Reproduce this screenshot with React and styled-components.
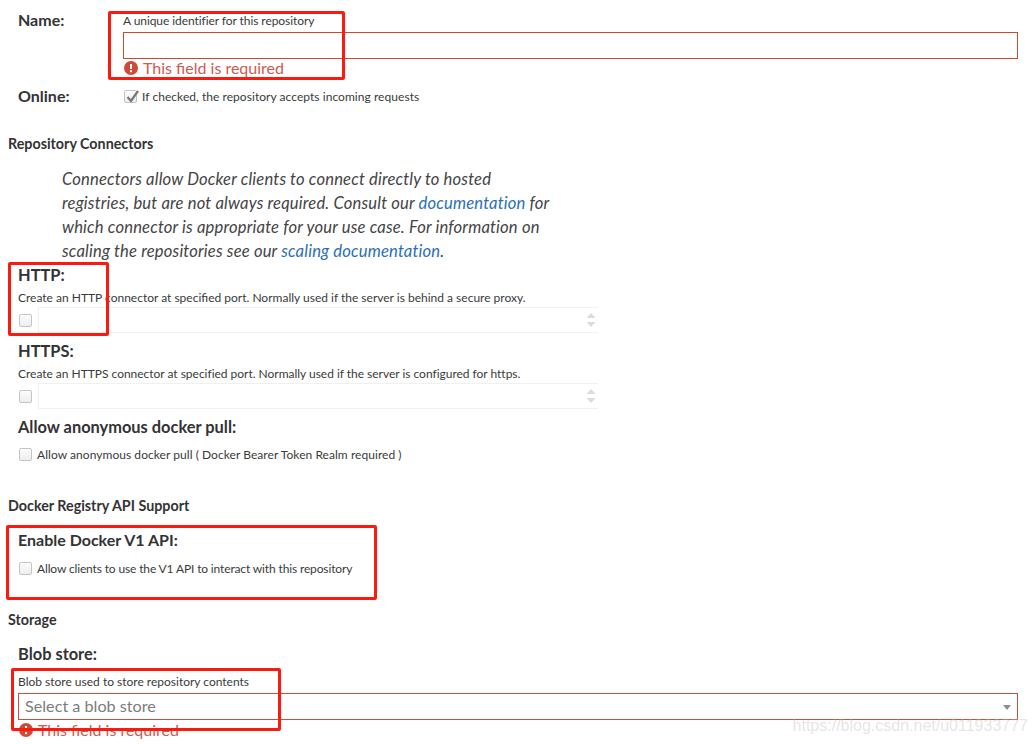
import React from "react"
import styled, { createGlobalStyle } from "styled-components"

const GlobalStyle = createGlobalStyle`
	html, body { margin: 0; padding: 0; background: #fff; }
	body {
		font-family: Lato, "Open Sans", "Liberation Sans", sans-serif;
		color: #333;
		width: 1036px;
		height: 744px;
		overflow: hidden;
	}
`

const Page = styled.div`
	position: relative;
	width: 1036px;
	height: 744px;
	overflow: hidden;
	padding: 11px 18px 0 18px;
	box-sizing: border-box;
`

const Row = styled.div`
	display: flex;
	height: ${props => props.height}px;
`

const RowLabel = styled.div`
	width: 105px;
	flex: none;
	font-size: 16px;
	font-weight: 700;
	line-height: 18px;
	color: #333;
`

const RowBody = styled.div`
	flex: 1;
	min-width: 0;
`

const Help = styled.div`
	font-size: 12px;
	letter-spacing: ${props => props.spacing || 0}px;
	line-height: 14px;
	height: ${props => props.height || 14}px;
	padding-top: ${props => props.top || 0}px;
	color: #3a3a3a;
`

const TextInput = styled.div`
	box-sizing: border-box;
	height: 27px;
	border: 1px solid #d0492f;
	background: #fff;
`

const Error = styled.div`
	display: flex;
	align-items: center;
	gap: 5px;
	height: 18px;
	margin-top: ${props => props.top || 0}px;
	padding-left: 1px;
	font-size: 16px;
	line-height: 18px;
	color: #cf5a52;
`

const ErrorIcon = () => (
	<svg width="14" height="14" viewBox="0 0 14 14">
		<circle cx="7" cy="7" r="7" fill="#cc4a37" />
		<rect x="6" y="3" width="2" height="5" fill="#fff" />
		<rect x="6" y="9.2" width="2" height="2" fill="#fff" />
	</svg>
)

const CheckRow = styled.div`
	display: flex;
	align-items: center;
	gap: 5px;
	height: ${props => props.height || 14}px;
	font-size: 12px;
	letter-spacing: ${props => props.spacing || 0.05}px;
	color: #3a3a3a;
	padding-left: ${props => props.indent || 0}px;
`

const Box = styled.div`
	position: relative;
	flex: none;
	box-sizing: border-box;
	width: 13px;
	height: 13px;
	border: 1px solid #c4c4c4;
	border-radius: 2px;
	background: linear-gradient(#fbfbfb, #eeeeee);
	box-shadow: inset 0 1px 0 #fff;
`

const CheckMark = styled.svg`
	position: absolute;
	left: 0;
	top: -3px;
`

const Section = styled.div`
	margin-left: -10px;
	height: ${props => props.height}px;
	margin-top: ${props => props.top}px;
	font-size: 14.3px;
	font-weight: 700;
	line-height: 15px;
	color: #333;
`

const Note = styled.p`
	margin: 0 0 0 44px;
	white-space: nowrap;
	font-size: 16.6px;
	letter-spacing: 0.17px;
	font-style: italic;
	line-height: 24px;
	color: #444;
`

const Link = styled.a`
	color: #2a6fb5;
	text-decoration: none;
`

const FieldLabel = styled.div`
	font-size: ${props => props.size || 16.4}px;
	font-weight: 700;
	line-height: 18px;
	height: ${props => props.height}px;
	margin-top: ${props => props.top || 0}px;
	color: #333;
`

const PortRow = styled.div`
	display: flex;
	align-items: center;
	width: 580px;
	height: 26px;
	gap: 6px;
	padding-left: 1px;
	box-sizing: border-box;
`

const PortInput = styled.div`
	position: relative;
	flex: 1;
	box-sizing: border-box;
	height: 26px;
	border: 1px solid #f0f0f0;
	border-right: 0;
`

const Spinner = styled.svg`
	position: absolute;
	right: 2px;
	top: 4px;
`

const Select = styled.div`
	position: relative;
	box-sizing: border-box;
	height: 27px;
	line-height: 24px;
	padding-left: 6px;
	border: 1px solid #c9503a;
	font-size: 16.2px;
	color: #7c7c7c;
`

const Caret = styled.div`
	position: absolute;
	right: 6px;
	top: 11px;
	width: 0;
	height: 0;
	border-left: 4px solid transparent;
	border-right: 4px solid transparent;
	border-top: 5px solid #8e8e8e;
`

// the red marks drawn on top of the screenshot
const Mark = styled.div`
	position: absolute;
	box-sizing: border-box;
	left: ${props => props.x}px;
	top: ${props => props.y}px;
	width: ${props => props.w}px;
	height: ${props => props.h}px;
	border: 3px solid #fb1a10;
	border-radius: 2px;
`

const Watermark = styled.div`
	position: absolute;
	right: 8px;
	top: 715px;
	font-family: "Liberation Sans", Arial, sans-serif;
	font-size: 16px;
	line-height: 22px;
	color: rgba(190, 190, 190, 0.4);
`

const Port = () => (
	<PortRow>
		<Box />
		<PortInput>
			<Spinner width="10" height="16" viewBox="0 0 10 16">
				<path d="M5 1 L9.5 6 H0.5 Z M5 15 L9.5 10 H0.5 Z" fill="#dcdcdc" />
			</Spinner>
		</PortInput>
	</PortRow>
)

const App = () => (
	<Page>
		<GlobalStyle />
		<Row height={76}>
			<RowLabel>Name:</RowLabel>
			<RowBody>
				<Help height={18} top={3} spacing={-0.07}>A unique identifier for this repository</Help>
				<TextInput />
				<Error><ErrorIcon />This field is required</Error>
			</RowBody>
		</Row>
		<Row height={27}>
			<RowLabel>Online:</RowLabel>
			<RowBody>
				<CheckRow height={19} indent={1}>
					<Box>
						<CheckMark width="16" height="16" viewBox="0 0 16 16">
							<path d="M2.5 9 L6 13 L13 3" fill="none" stroke="#777" strokeWidth="2.2" />
						</CheckMark>
					</Box>
					If checked, the repository accepts incoming requests
				</CheckRow>
			</RowBody>
		</Row>
		<Section top={22} height={31}>Repository Connectors</Section>
		<Note>
			Connectors allow Docker clients to connect directly to hosted<br />
			registries, but are not always required. Consult our <Link>documentation</Link> for<br />
			which connector is appropriate for your use case. For information on<br />
			scaling the repositories see our <Link>scaling documentation</Link>.
		</Note>
		<FieldLabel top={3} height={22}>HTTP:</FieldLabel>
		<Help height={16} top={3}>Create an HTTP connector at specified port. Normally used if the server is behind a secure proxy.</Help>
		<Port />
		<FieldLabel top={9} height={18}>HTTPS:</FieldLabel>
		<Help height={16} top={7} spacing={-0.02}>Create an HTTPS connector at specified port. Normally used if the server is configured for https.</Help>
		<Port />
		<FieldLabel top={9} height={28}>Allow anonymous docker pull:</FieldLabel>
		<CheckRow height={16} indent={1}><Box />Allow anonymous docker pull ( Docker Bearer Token Realm required )</CheckRow>
		<Section top={36} height={33}>Docker Registry API Support</Section>
		<FieldLabel height={29} size={16}>Enable Docker V1 API:</FieldLabel>
		<CheckRow height={16} indent={1} spacing={-0.14}><Box />Allow clients to use the V1 API to interact with this repository</CheckRow>
		<Section top={36} height={33}>Storage</Section>
		<FieldLabel height={30}>Blob store:</FieldLabel>
		<Help height={18}>Blob store used to store repository contents</Help>
		<Select>Select a blob store<Caret /></Select>
		<Error top={1}><ErrorIcon />This field is required</Error>

		<Mark x={108} y={11} w={237} h={69} />
		<Mark x={8} y={262} w={101} h={74} />
		<Mark x={6} y={525} w={371} h={75} />
		<Mark x={11} y={668} w={270} h={63} />
		<Watermark>https://blog.csdn.net/u011933777</Watermark>
	</Page>
)

export default App
